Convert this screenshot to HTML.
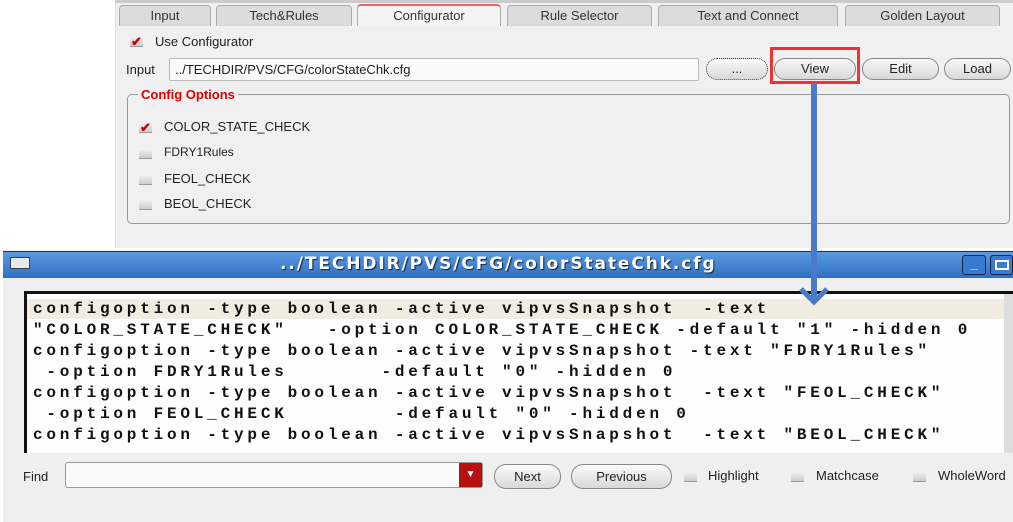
<!DOCTYPE html>
<html><head><meta charset="utf-8"><style>
*{margin:0;padding:0;box-sizing:border-box}
body{width:1013px;height:522px;background:#fff;position:relative;overflow:hidden;font-family:"Liberation Sans",sans-serif;font-size:13px;color:#222}
.a{position:absolute}
.tab{position:absolute;top:5px;height:21px;background:#dcdcdc;border:1px solid #aaa;border-bottom:none;border-radius:4px 4px 0 0;text-align:center;line-height:20px;color:#333}
.btn{position:absolute;height:22px;border:1px solid #888;border-radius:11px;background:linear-gradient(#fafafa,#d8d8d8);text-align:center;line-height:20px;color:#222}
.cb{position:absolute;width:13px;height:11px;background:linear-gradient(#f4f4f4,#ccc);border-bottom:1px solid #999}
.chk{color:#c00;font-weight:bold;font-size:13px;line-height:11px;text-align:center}
pre{position:absolute;left:33px;font-family:"Liberation Mono",monospace;font-weight:bold;font-size:16px;letter-spacing:3.8px;color:#111;line-height:21px}
</style></head><body>
<div class="a" style="left:115px;top:0;width:898px;height:248px;background:#f0f0f0;border-left:1px solid #ddd"></div>
<div class="a" style="left:115px;top:0;width:898px;height:3px;background:#ccc"></div>
<div class="tab" style="left:119px;width:92px">Input</div>
<div class="tab" style="left:216px;width:136px">Tech&amp;Rules</div>
<div class="tab" style="left:357px;width:144px;background:#f4f4f4;border-top:2px solid #e66;top:4px;height:22px">Configurator</div>
<div class="tab" style="left:507px;width:145px">Rule Selector</div>
<div class="tab" style="left:658px;width:180px">Text and Connect</div>
<div class="tab" style="left:845px;width:155px">Golden Layout</div>
<div class="cb chk" style="left:130px;top:36px">✔</div>
<div class="a" style="left:155px;top:34px">Use Configurator</div>
<div class="a" style="left:126px;top:62px">Input</div>
<div class="a" style="left:169px;top:58px;width:530px;height:23px;background:#fafafa;border:1px solid #bbb;border-radius:2px;padding:3px 5px">../TECHDIR/PVS/CFG/colorStateChk.cfg</div>
<div class="btn" style="left:706px;top:58px;width:62px;border-style:dotted;border-color:#333">...</div>
<div class="btn" style="left:774px;top:58px;width:82px">View</div>
<div class="a" style="left:770px;top:47px;width:90px;height:37px;border:3px solid #e33"></div>
<div class="btn" style="left:862px;top:58px;width:77px">Edit</div>
<div class="btn" style="left:944px;top:58px;width:67px">Load</div>
<div class="a" style="left:127px;top:94px;width:883px;height:130px;border:1px solid #999;border-radius:5px"></div>
<div class="a" style="left:138px;top:87px;background:#f0f0f0;padding:0 3px;color:#d00;font-weight:bold;font-size:13px">Config Options</div>
<div class="cb chk" style="left:139px;top:122px">✔</div>
<div class="a" style="left:164px;top:119px">COLOR_STATE_CHECK</div>
<div class="cb" style="left:139px;top:148px"></div>
<div class="a" style="left:164px;top:145px;font-size:12px">FDRY1Rules</div>
<div class="cb" style="left:139px;top:174px"></div>
<div class="a" style="left:164px;top:171px">FEOL_CHECK</div>
<div class="cb" style="left:139px;top:199px"></div>
<div class="a" style="left:164px;top:196px">BEOL_CHECK</div>
<!-- dialog -->
<div class="a" style="left:3px;top:250px;width:1010px;height:272px;background:#efefef"></div>
<div class="a" style="left:3px;top:251px;width:1010px;height:27px;background:linear-gradient(#5a9ae0,#2f6fc2);border-top:1px solid #234"></div>
<div class="a" style="left:10px;top:257px;width:20px;height:12px;background:#e8e8e8;border:1px solid #345"></div>
<div class="a" style="left:280px;top:254px;color:#fff;font-family:'DejaVu Sans',sans-serif;font-weight:bold;font-size:17px;text-shadow:1px 1px 1px #123;letter-spacing:1.9px">../TECHDIR/PVS/CFG/colorStateChk.cfg</div>
<div class="a" style="left:962px;top:255px;width:24px;height:20px;border:1px solid #124;border-radius:3px;background:#3a7ad0;color:#fff;text-align:center;font-weight:bold;line-height:16px">_</div>
<div class="a" style="left:990px;top:255px;width:23px;height:20px;border:1px solid #124;border-radius:3px;background:#3a7ad0"><div style="margin:4px 4px;width:14px;height:10px;border:2px solid #fff"></div></div>
<div class="a" style="left:24px;top:291px;width:989px;height:162px;background:#fdfdfd;border-left:3px solid #111;border-top:3px solid #111"></div>
<div class="a" style="left:27px;top:299px;width:980px;height:20px;background:#f2ebe2"></div>
<div class="a" style="left:1004px;top:294px;width:9px;height:159px;background:#ddd"></div>
<pre style="top:299px">configoption -type boolean -active vipvsSnapshot  -text
"COLOR_STATE_CHECK"   -option COLOR_STATE_CHECK -default "1" -hidden 0
configoption -type boolean -active vipvsSnapshot -text "FDRY1Rules"
 -option FDRY1Rules       -default "0" -hidden 0
configoption -type boolean -active vipvsSnapshot  -text "FEOL_CHECK"
 -option FEOL_CHECK        -default "0" -hidden 0
configoption -type boolean -active vipvsSnapshot  -text "BEOL_CHECK"</pre>
<div class="a" style="left:24px;top:453px;width:989px;height:69px;background:#efefef"></div>
<div class="a" style="left:23px;top:469px">Find</div>
<div class="a" style="left:65px;top:462px;width:418px;height:26px;background:#fafafa;border:1px solid #999;border-radius:3px"></div>
<div class="a" style="left:459px;top:463px;width:23px;height:24px;background:#b81010;color:#fff;text-align:center;font-size:10px;line-height:24px">▼</div>
<div class="btn" style="left:494px;top:464px;width:67px;height:25px;border-radius:12px;line-height:23px">Next</div>
<div class="btn" style="left:571px;top:464px;width:101px;height:25px;border-radius:12px;line-height:23px">Previous</div>
<div class="cb" style="left:684px;top:471px"></div>
<div class="a" style="left:708px;top:468px">Highlight</div>
<div class="cb" style="left:791px;top:471px"></div>
<div class="a" style="left:816px;top:468px">Matchcase</div>
<div class="cb" style="left:913px;top:471px"></div>
<div class="a" style="left:938px;top:468px;white-space:nowrap">WholeWord</div>
<!-- arrow -->
<div class="a" style="left:811px;top:83px;width:6px;height:218px;background:#4a7acb"></div>
<svg class="a" style="left:798px;top:285px" width="32" height="22"><path d="M3 4 L16 17 L29 4" fill="none" stroke="#4a7acb" stroke-width="5"/></svg>
</body></html>
